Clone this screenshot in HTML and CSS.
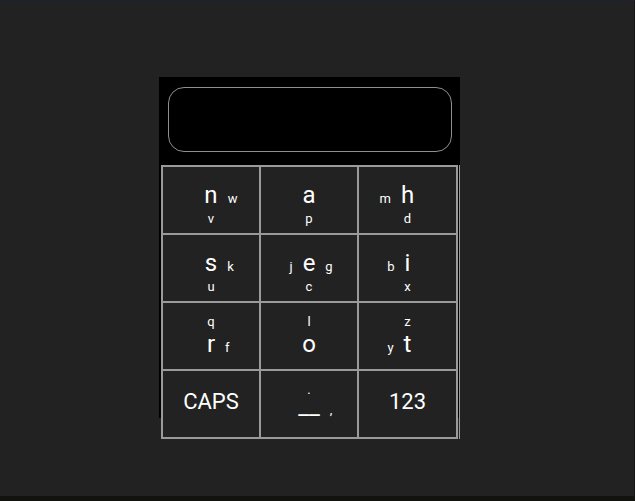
FILE: index.html
```html
<!DOCTYPE html>
<html lang="en">
<head>
<meta charset="utf-8">
<title>Keyboard</title>
<link rel="stylesheet" href="styles.css">
</head>
<body>
<div class="screen">
  <div class="panel">
    <div class="display"></div>
    <div class="keys-wrap">
      <div class="keys">
        <div class="key">
          <div class="mid"><span class="side l"></span><span class="main">n</span><span class="side r">w</span></div>
          <div class="small">v</div>
        </div>
        <div class="key">
          <div class="mid"><span class="side l"></span><span class="main">a</span><span class="side r"></span></div>
          <div class="small">p</div>
        </div>
        <div class="key">
          <div class="mid"><span class="side l">m</span><span class="main">h</span><span class="side r"></span></div>
          <div class="small">d</div>
        </div>
        <div class="key">
          <div class="mid"><span class="side l"></span><span class="main">s</span><span class="side r">k</span></div>
          <div class="small">u</div>
        </div>
        <div class="key">
          <div class="mid"><span class="side l">j</span><span class="main">e</span><span class="side r">g</span></div>
          <div class="small">c</div>
        </div>
        <div class="key">
          <div class="mid"><span class="side l">b</span><span class="main">i</span><span class="side r"></span></div>
          <div class="small">x</div>
        </div>
        <div class="key">
          <div class="small">q</div>
          <div class="mid"><span class="side l"></span><span class="main">r</span><span class="side r">f</span></div>
        </div>
        <div class="key">
          <div class="small">l</div>
          <div class="mid"><span class="side l"></span><span class="main">o</span><span class="side r"></span></div>
        </div>
        <div class="key">
          <div class="small">z</div>
          <div class="mid"><span class="side l">y</span><span class="main">t</span><span class="side r"></span></div>
        </div>
        <div class="key">
          <div class="label">CAPS</div>
        </div>
        <div class="key space">
          <div class="small">.</div>
          <div class="mid"><span class="side l"></span><span class="main">__</span><span class="side r">,</span></div>
        </div>
        <div class="key">
          <div class="label">123</div>
        </div>
      </div>
    </div>
  </div>
</div>
</body>
</html>
```
FILE: styles.css
```css
html, body {
  margin: 0;
  padding: 0;
  background: #222222;
}

.screen {
  box-sizing: border-box;
  width: 635px;
  height: 501px;
  border-top: 1px solid #1d2336;
  border-bottom: 5px solid #12130f;
  border-right: 1px solid #151515;
  padding: 76px 0 0 159px;
  font-family: Roboto, "Liberation Sans", sans-serif;
  color: #ffffff;
}

.panel {
  width: 301px;
  height: 341px;
  background: #000000;
  display: flex;
  flex-direction: column;
}

.display {
  box-sizing: border-box;
  width: 284px;
  height: 65px;
  margin: 10px 0 0 9px;
  border: 1px solid #8e8e8e;
  border-radius: 16px;
  flex: none;
}

.keys-wrap {
  margin: 13px 0 0 2px;
  width: 297px;
  padding-right: 1px;
  border-right: 1px solid #9a9a9a;
  flex: none;
}

.keys {
  display: grid;
  grid-template-columns: 98px 98px 99px;
  grid-auto-rows: 68px;
  border: 1px solid #9a9a9a;
}

.key {
  box-sizing: border-box;
  border: 1px solid #9a9a9a;
  background: #222222;
  padding-top: 4px;
  display: flex;
  flex-direction: column;
  justify-content: center;
  align-items: center;
}

.mid {
  display: grid;
  grid-template-columns: 1fr auto 1fr;
  align-items: baseline;
  width: 100%;
}

.main {
  font-size: 24px;
  line-height: 33px;
  text-align: center;
}

.side {
  font-size: 13px;
  line-height: 13px;
}

.side.l {
  justify-self: end;
  padding-right: 10px;
}

.side.r {
  justify-self: start;
  padding-left: 10px;
}

.small {
  font-size: 13px;
  line-height: 13px;
  text-align: center;
}

.label {
  font-size: 22px;
  line-height: 33px;
  margin-bottom: 10px;
}

.space .small {
  line-height: 4px;
}

.space .mid {
  margin-bottom: 5px;
}

.space .main {
  line-height: 28px;
}
```
